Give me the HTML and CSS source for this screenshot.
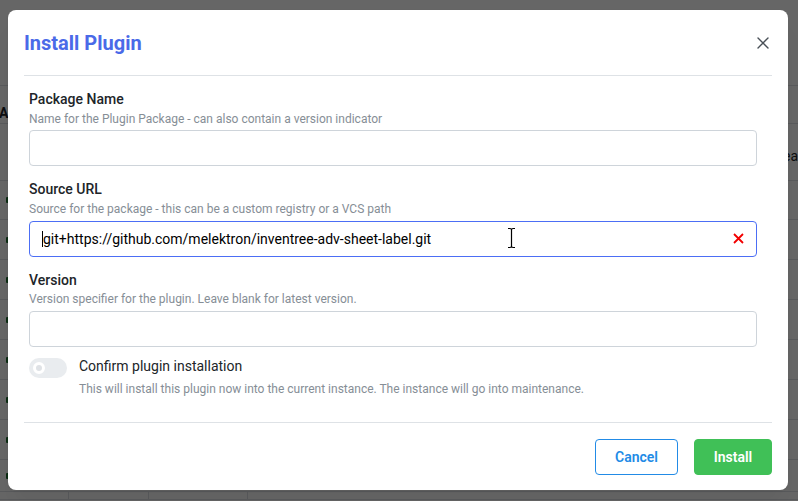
FILE: index.html
```html
<!DOCTYPE html>
<html lang="en">
<head>
<meta charset="utf-8">
<title>Install Plugin</title>
<link rel="stylesheet" href="styles.css">
</head>
<body>
<div class="page">
  <div class="topbar"></div>
  <div class="row r-head"><span class="head-text">Active</span></div>
  <div class="row r-tall"><span class="mark"></span><span class="right-text">ear</span></div>
  <div class="row r-38"><span class="mark"></span></div>
  <div class="row r-39"><span class="mark"></span></div>
  <div class="row r-39"><span class="mark"></span></div>
  <div class="row r-39"><span class="mark"></span></div>
  <div class="row r-39"><span class="mark"></span></div>
  <div class="row r-39"><span class="mark"></span></div>
  <div class="row r-39"><span class="mark"></span></div>
  <div class="row r-31"><span class="mark"></span></div>
  <div class="row r-last">
    <span class="col c1"></span><span class="col c2"></span><span class="col c3"></span>
  </div>
</div>
<div class="overlay"></div>

<div class="modal">
  <div class="modal-header">
    <h2 class="title">Install Plugin</h2>
    <svg class="close" width="12" height="12" viewBox="0 0 12 12"><path d="M1 1 L11 11 M11 1 L1 11" stroke="#495057" stroke-width="1.4" fill="none" stroke-linecap="round"/></svg>
  </div>

  <div class="modal-body">
    <div class="field">
      <label class="label">Package Name</label>
      <div class="desc">Name for the Plugin Package - can also contain a version indicator</div>
      <div class="input"></div>
    </div>
    <div class="field">
      <label class="label">Source URL</label>
      <div class="desc">Source for the package - this can be a custom registry or a VCS path</div>
      <div class="input focused">
        <span class="caret"></span><span class="value">git+https://github.com/melektron/inventree-adv-sheet-label.git</span>
        <svg class="clear" width="11" height="11" viewBox="0 0 11 11"><path d="M1 1 L10 10 M10 1 L1 10" stroke="#f20000" stroke-width="1.8" fill="none"/></svg>
      </div>
    </div>
    <div class="field tight">
      <label class="label">Version</label>
      <div class="desc">Version specifier for the plugin. Leave blank for latest version.</div>
      <div class="input"></div>
    </div>
    <div class="switch-row">
      <div class="track"><span class="thumb"></span></div>
      <div class="switch-text">
        <div class="switch-label">Confirm plugin installation</div>
        <div class="desc switch-desc">This will install this plugin now into the current instance. The instance will go into maintenance.</div>
      </div>
    </div>
  </div>

  <div class="modal-footer">
    <button class="btn btn-outline">Cancel</button>
    <button class="btn btn-green">Install</button>
  </div>
</div>

<svg class="ibeam" width="11" height="22" viewBox="0 0 11 22">
  <path d="M2 1.5 H4 Q5.5 1.5 5.5 3 V19 Q5.5 20.5 4 20.5 H2 M9 1.5 H7 Q5.5 1.5 5.5 3 M5.5 19 Q5.5 20.5 7 20.5 H9" stroke="#fff" stroke-width="3" fill="none"/>
  <path d="M2 1.5 H4 Q5.5 1.5 5.5 3 V19 Q5.5 20.5 4 20.5 H2 M9 1.5 H7 Q5.5 1.5 5.5 3 M5.5 19 Q5.5 20.5 7 20.5 H9" stroke="#000" stroke-width="1.2" fill="none"/>
</svg>
</body>
</html>
```

FILE: styles.css
```css
* { box-sizing: border-box; }

html, body {
  margin: 0;
  padding: 0;
}

body {
  width: 798px;
  height: 501px;
  overflow: hidden;
  position: relative;
  background: #ffffff;
  font-family: Roboto, "Noto Sans", "Liberation Sans", sans-serif;
  color: #212529;
}

/* ---------- page behind the modal ---------- */
.page {
  display: flex;
  flex-direction: column;
}

.topbar {
  height: 86px;
  border-bottom: 1px solid #dee2e6;
}

.row {
  display: flex;
  align-items: center;
  border-bottom: 1px solid #dee2e6;
  font-size: 14px;
}

.r-head { height: 38px; align-items: flex-end; padding-bottom: 2px; }
.r-tall { height: 57px; }
.r-38 { height: 39px; }
.r-39 { height: 40px; }
.r-31 { height: 32px; }
.r-last { height: 8px; align-items: stretch; }

.head-text {
  font-weight: 700;
  margin-left: -1px;
}

.mark {
  width: 4px;
  height: 6px;
  margin-left: 6px;
  background: #1f6e30;
  border-radius: 1px;
}

.right-text {
  margin-left: 777px;
  padding-top: 8px;
  white-space: nowrap;
  color: #212529;
}

.col { border-right: 1px solid #dee2e6; }
.c1 { width: 69px; }
.c2 { width: 80px; }
.c3 { width: 99px; }

.overlay {
  position: absolute;
  inset: 0;
  background: rgba(0, 0, 0, 0.6);
}

/* ---------- modal ---------- */
.modal {
  position: absolute;
  left: 8px;
  top: 10px;
  width: 780px;
  height: 480px;
  background: #ffffff;
  border-radius: 8px;
  display: flex;
  flex-direction: column;
  box-shadow: 0 1px 3px rgba(0,0,0,0.05), 0 20px 25px -5px rgba(0,0,0,0.05);
}

.modal-header {
  height: 66px;
  margin: 0 16px;
  border-bottom: 1px solid #dee2e6;
  display: flex;
  align-items: center;
  justify-content: space-between;
}

.title {
  margin: 0;
  font-size: 20px;
  line-height: 1.55;
  font-weight: 700;
  color: #4a6ae8;
  padding-top: 1px;
}

.close { margin-right: 3px; }

.modal-body {
  padding: 13px 31px 0 21px;
}

.field { margin-bottom: 13px; }
.field.tight { margin-bottom: 9px; }

.label {
  display: block;
  font-size: 14px;
  font-weight: 500;
  line-height: 20.7px;
  color: #212529;
}

.desc {
  font-size: 12px;
  line-height: 1.55;
  color: #868e96;
}

.switch-desc { margin-top: 2px; }

.input {
  margin-top: 2px;
  height: 36px;
  border: 1px solid #ced4da;
  border-radius: 4px;
  display: flex;
  align-items: center;
  padding: 0 12px;
  font-size: 14px;
  color: #000;
}

.input.focused { border-color: #4c6ef5; }

.caret {
  width: 1px;
  height: 16px;
  background: #000;
}

.value { flex: 1; }

/* switch */
.switch-row {
  display: flex;
  align-items: flex-start;
  gap: 12px;
}

.track {
  margin-top: 2px;
  width: 38px;
  height: 20px;
  border-radius: 10px;
  background: #e9ecef;
  display: flex;
  align-items: center;
  padding-left: 4px;
}

.thumb {
  width: 12px;
  height: 12px;
  border-radius: 50%;
  border: 3px solid #ffffff;
  background: #dfe2e6;
}

.switch-label {
  font-size: 14px;
  line-height: 1.55;
  color: #212529;
}

/* footer */
.modal-footer {
  margin: auto 16px 0;
  border-top: 1px solid #dee2e6;
  padding: 16px 0 15px;
  display: flex;
  justify-content: flex-end;
  gap: 16px;
}

.btn {
  height: 36px;
  border-radius: 4px;
  font-family: inherit;
  font-size: 14px;
  font-weight: 600;
  padding: 0 17px;
  cursor: pointer;
}

.btn-outline {
  width: 83px;
  background: #ffffff;
  border: 1px solid #228be6;
  color: #228be6;
}

.btn-green {
  width: 78px;
  background: #40c057;
  border: 1px solid #40c057;
  color: #ffffff;
}

/* mouse pointer drawn over the form */
.ibeam {
  position: absolute;
  left: 506px;
  top: 227px;
}
```
